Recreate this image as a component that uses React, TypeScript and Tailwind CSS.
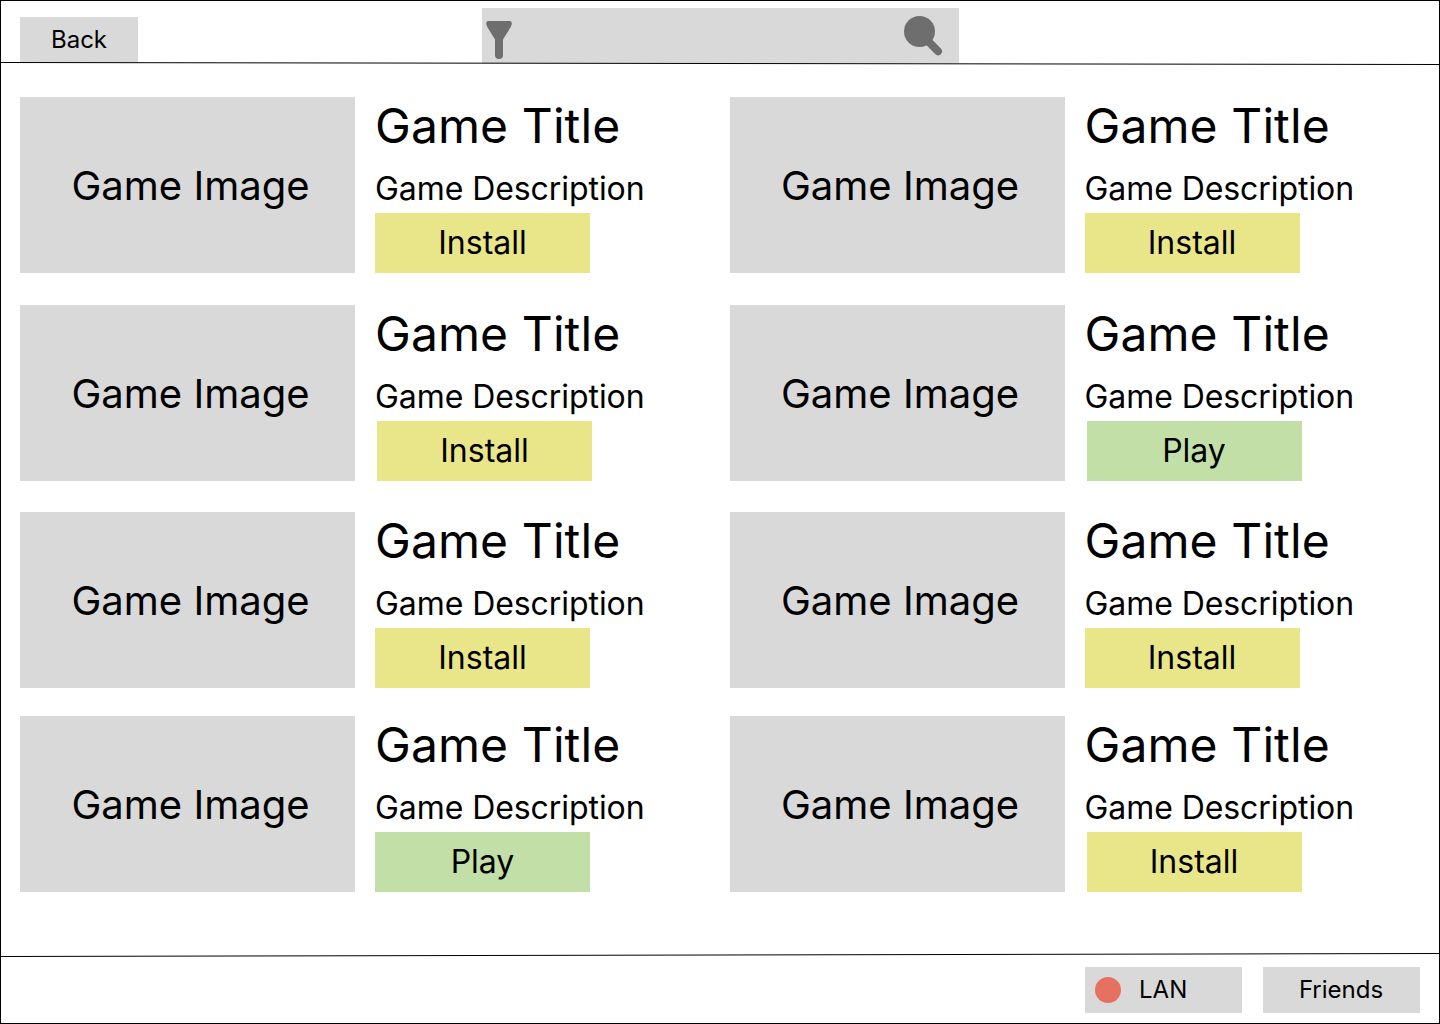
type Action = "Install" | "Play";

interface Game {
  action: Action;
  shifted?: boolean;
}

const rows: { gap: string; games: Game[] }[] = [
  { gap: "", games: [{ action: "Install" }, { action: "Install" }] },
  { gap: "mt-8", games: [{ action: "Install", shifted: true }, { action: "Play", shifted: true }] },
  { gap: "mt-[31px]", games: [{ action: "Install" }, { action: "Install" }] },
  { gap: "mt-7", games: [{ action: "Play" }, { action: "Install", shifted: true }] },
];

function GameCard({ action, shifted }: Game) {
  return (
    <article className="flex h-[176px] w-[710px] gap-5">
      <div className="flex w-[335px] shrink-0 items-center justify-center bg-[#d9d9d9] pt-0.5 pl-1.5 text-[40px] leading-[48px]">
        Game Image
      </div>
      <div className="flex flex-col items-start whitespace-nowrap">
        <h2 className="text-[48px] leading-[58px] tracking-[0.1px]">Game Title</h2>
        <p className="mt-3.5 text-[32px] leading-[39px] tracking-[-0.07px]">Game Description</p>
        <button
          className={`mt-[5px] flex h-[60px] w-[215px] items-center justify-center pb-0.5 text-[32px] leading-[39px] ${
            action === "Play" ? "bg-[#c1dfa7]" : "bg-[#e9e68a]"
          } ${shifted ? "ml-0.5" : ""}`}
        >
          {action}
        </button>
      </div>
    </article>
  );
}

function Divider({ y1, y2 }: { y1: number; y2: number }) {
  return (
    <svg viewBox="0 0 1438 4" className="relative block h-1 w-full shrink-0">
      <line x1="0" y1={y1} x2="1438" y2={y2} stroke="black" strokeWidth="1" />
    </svg>
  );
}

export default function App() {
  return (
    <div className="flex h-[1024px] w-[1440px] flex-col overflow-hidden border border-black bg-white font-['Inter',sans-serif] font-[370] text-black">
      <header className="flex h-[61px] shrink-0 items-start pl-[19px]">
        <button className="mt-4 flex h-[46px] w-[118px] items-center justify-center bg-[#d9d9d9] pb-0.5 text-2xl leading-[29px]">
          Back
        </button>
        <div className="mt-[7px] ml-[344px] flex h-[55px] w-[477px] items-start justify-between bg-[#d9d9d9] pr-4 pl-1">
          <svg viewBox="0 0 26 38" className="mt-[13px] h-[38px] w-[26px]" fill="#6e6e6e">
            <path d="M2 0H24Q26 .3 25.8 3L24.7 6L17 18.5V34A4 4 0 0 1 9 34V18.5L1.3 6L.2 3Q0 .3 2 0Z" />
          </svg>
          <svg viewBox="0 0 40 42" className="mt-[7px] h-[42px] w-10">
            <circle cx="16.5" cy="16.5" r="15.5" fill="#6e6e6e" />
            <path d="M24 25L35 36.3" stroke="#6e6e6e" strokeWidth="8" strokeLinecap="round" />
          </svg>
        </div>
      </header>
      <Divider y1={0.5} y2={2.5} />
      <main className="flex h-[887px] shrink-0 flex-col pt-[31px] pl-[19px]">
        {rows.map((row, i) => (
          <section key={i} className={`flex ${row.gap}`}>
            {row.games.map((game, j) => (
              <GameCard key={j} {...game} />
            ))}
          </section>
        ))}
      </main>
      <Divider y1={3.5} y2={0.5} />
      <footer className="flex items-start gap-[21px] pt-2.5 pl-[1084px] text-2xl leading-[29px]">
        <button className="flex h-[46px] w-[157px] items-center bg-[#d9d9d9] pl-2.5">
          <span className="size-[26px] rounded-full bg-[#e67161]" />
          <span className="ml-[18px] pb-0.5">LAN</span>
        </button>
        <button className="flex h-[46px] w-[157px] items-center justify-center bg-[#d9d9d9] pr-px pb-0.5">Friends</button>
      </footer>
    </div>
  );
}
